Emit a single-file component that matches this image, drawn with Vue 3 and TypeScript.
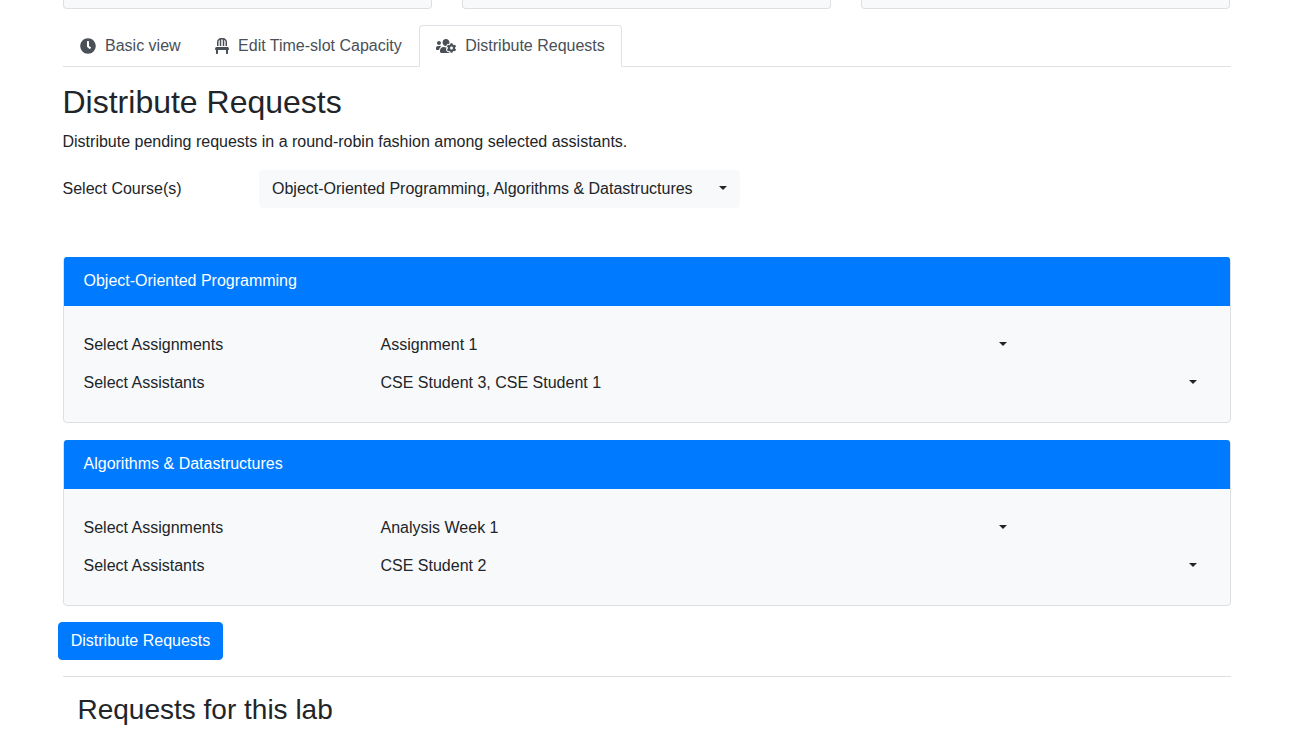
<script setup lang="ts">
interface Tab { label: string; view: string; width: number; d: string; active?: boolean }
interface Panel { title: string; assignment: string; assistants: string }

const tabs: Tab[] = [
  { label: 'Basic view', view: '0 0 512 512', width: 16, d: 'M256,8C119,8,8,119,8,256S119,504,256,504,504,393,504,256,393,8,256,8Zm92.49,313h0l-20,25a16,16,0,0,1-22.49,2.5h0l-67-49.72a40,40,0,0,1-15-31.23V112a16,16,0,0,1,16-16h32a16,16,0,0,1,16,16V256l58,42.5A16,16,0,0,1,348.49,321Z' },
  { label: 'Edit Time-slot Capacity', view: '0 0 448 512', width: 14, d: 'M112 128c0-29.5 16.2-55 40-68.9V256h48V48h48v208h48V59.1c23.8 13.9 40 39.4 40 68.9v128h48V128C384 57.3 326.7 0 256 0h-64C121.3 0 64 57.3 64 128v128h48zm334.3 213.9l-10.7-32c-4.4-13.1-16.6-21.9-30.4-21.9H42.7c-13.8 0-26 8.8-30.4 21.9l-10.7 32C-5.2 362.6 10.2 384 32 384v112c0 8.8 7.2 16 16 16h32c8.8 0 16-7.2 16-16V384h256v112c0 8.8 7.2 16 16 16h32c8.8 0 16-7.2 16-16V384c21.8 0 37.2-21.4 30.3-42.1z' },
  { label: 'Distribute Requests', view: '0 0 640 512', width: 20, active: true, d: 'M610.5 341.3c2.6-14.1 2.6-28.5 0-42.6l25.8-14.9c3-1.7 4.3-5.2 3.3-8.5-6.7-21.6-18.2-41.2-33.2-57.4-2.3-2.5-6-3.1-9-1.4l-25.8 14.9c-10.9-9.3-23.4-16.5-36.9-21.3v-29.8c0-3.4-2.4-6.4-5.7-7.1-22.3-5-45-4.8-66.2 0-3.3.7-5.7 3.7-5.7 7.1v29.8c-13.5 4.8-26 12-36.9 21.3l-25.8-14.9c-2.9-1.7-6.7-1.1-9 1.4-15 16.2-26.5 35.8-33.2 57.4-1 3.3.4 6.8 3.3 8.5l25.8 14.9c-2.6 14.1-2.6 28.5 0 42.6l-25.8 14.9c-3 1.7-4.3 5.2-3.3 8.5 6.7 21.6 18.2 41.1 33.2 57.4 2.3 2.5 6 3.1 9 1.4l25.8-14.9c10.9 9.3 23.4 16.5 36.9 21.3v29.8c0 3.4 2.4 6.4 5.7 7.1 22.3 5 45 4.8 66.2 0 3.3-.7 5.7-3.7 5.7-7.1v-29.8c13.5-4.8 26-12 36.9-21.3l25.8 14.9c2.9 1.7 6.7 1.1 9-1.4 15-16.2 26.5-35.8 33.2-57.4 1-3.3-.4-6.8-3.3-8.5l-25.8-14.9zM496 368.5c-26.8 0-48.5-21.8-48.5-48.5s21.8-48.5 48.5-48.5 48.5 21.8 48.5 48.5-21.7 48.5-48.5 48.5zM96 224c35.3 0 64-28.7 64-64s-28.7-64-64-64-64 28.7-64 64 28.7 64 64 64zm224 32c1.9 0 3.7-.5 5.6-.6 8.3-21.7 20.5-42.1 36.3-59.2 7.4-8 17.9-12.6 28.9-12.6 6.9 0 13.7 1.8 19.6 5.3l7.9 4.6c.8-.5 1.6-.9 2.4-1.4 7-14.6 11.2-30.8 11.2-48 0-61.9-50.1-112-112-112S208 82.1 208 144c0 61.9 50.1 112 112 112zm105.2 194.5c-2.3-1.2-4.6-2.6-6.8-3.9-8.2 4.8-15.3 9.8-27.5 9.8-10.9 0-21.4-4.6-28.9-12.6-18.3-19.8-32.3-43.9-40.2-69.6-10.7-34.5 24.9-49.7 25.8-50.3-.1-2.6-.1-5.2 0-7.8l-7.9-4.6c-3.8-2.2-7-5-9.8-8.1-3.3.2-6.5.6-9.8.6-24.6 0-47.6-6-68.5-16h-8.3C179.6 288 128 339.6 128 403.2V432c0 26.5 21.5 48 48 48h255.4c-3.7-6-6.2-12.8-6.2-20.1v-9.4zM173.1 274.6C161.5 263.1 145.6 256 128 256H64c-35.3 0-64 28.7-64 64v32c0 17.7 14.3 32 32 32h65.9c6.3-47.4 34.9-87.3 75.2-109.4z' },
]

const panels: Panel[] = [
  { title: 'Object-Oriented Programming', assignment: 'Assignment 1', assistants: 'CSE Student 3, CSE Student 1' },
  { title: 'Algorithms & Datastructures', assignment: 'Analysis Week 1', assistants: 'CSE Student 2' },
]
</script>

<template>
  <main class="page">
    <div class="stats">
      <div v-for="n in 3" :key="n" class="stat"></div>
    </div>

    <nav class="tabs">
      <a v-for="t in tabs" :key="t.label" class="tab" :class="{ active: t.active }">
        <svg class="icon" :viewBox="t.view" :width="t.width" height="16" aria-hidden="true">
          <path fill="currentColor" :d="t.d" />
        </svg>
        <span>{{ t.label }}</span>
      </a>
    </nav>

    <h2 class="title">Distribute Requests</h2>
    <p class="lead">Distribute pending requests in a round-robin fashion among selected assistants.</p>

    <div class="course-row">
      <label class="course-label">Select Course(s)</label>
      <button class="select course-select" type="button">
        <span>Object-Oriented Programming, Algorithms &amp; Datastructures</span>
        <i class="caret"></i>
      </button>
    </div>

    <section v-for="p in panels" :key="p.title" class="panel">
      <header class="panel-head">{{ p.title }}</header>
      <div class="panel-body">
        <label class="field-label">Select Assignments</label>
        <button class="select assignment" type="button">
          <span>{{ p.assignment }}</span>
          <i class="caret"></i>
        </button>
        <label class="field-label">Select Assistants</label>
        <button class="select" type="button">
          <span>{{ p.assistants }}</span>
          <i class="caret"></i>
        </button>
      </div>
    </section>

    <button class="primary" type="button">Distribute Requests</button>
    <hr class="rule" />
    <h3 class="sub">Requests for this lab</h3>
  </main>
</template>

<style scoped>
.page {
  width: 1168.5px;
  margin-left: 62.5px;
  color: #212529;
  font-family: "Liberation Sans", Arial, sans-serif;
  font-size: 16px;
  line-height: 24px;
}
.stats {
  display: grid;
  grid-template-columns: repeat(3, 369px);
  column-gap: 30px;
  margin-bottom: 16px;
}
.stat {
  height: 9px;
  box-sizing: border-box;
  background: #f8f9fa;
  border: 1px solid #dfdfdf;
  border-top: 0;
  border-radius: 0 0 4px 4px;
}
.tabs {
  display: flex;
  border-bottom: 1px solid #dee2e6;
  height: 42px;
  box-sizing: border-box;
}
.tab {
  display: flex;
  align-items: center;
  gap: 9.5px;
  height: 42px;
  box-sizing: border-box;
  padding: 0 16px;
  border: 1px solid transparent;
  border-radius: 4px 4px 0 0;
  color: #495057;
}
.tab.active {
  background: #fff;
  border-color: #dee2e6 #dee2e6 #fff;
}
.icon {
  display: block;
  flex: none;
}
.title {
  margin: 16px 0 8.6px;
  font-size: 32px;
  font-weight: 500;
  line-height: 38.4px;
}
.lead {
  margin: 0 0 16px;
}
.course-row {
  display: flex;
  align-items: center;
  margin-bottom: 49px;
}
.course-label {
  width: 196.5px;
}
.select {
  display: flex;
  align-items: center;
  justify-content: space-between;
  height: 38px;
  box-sizing: border-box;
  padding: 0 12px;
  border: 1px solid transparent;
  border-radius: 4px;
  background: #f8f9fa;
  color: #212529;
  font: inherit;
  text-align: left;
}
.course-select {
  width: 481px;
}
.caret {
  width: 0;
  height: 0;
  margin-bottom: 2px;
  border-top: 4.8px solid #212529;
  border-left: 4.8px solid transparent;
  border-right: 4.8px solid transparent;
}
.panel {
  height: 166px;
  box-sizing: border-box;
  margin-bottom: 17px;
  border: 1px solid #dfdfdf;
  border-radius: 4px;
  background: #f8f9fa;
}
.panel-head {
  height: 49px;
  box-sizing: border-box;
  margin-top: -1px;
  padding: 12px 20px;
  background: #007bff;
  color: #fff;
  border-radius: 3px 3px 0 0;
}
.panel-body {
  display: grid;
  grid-template-columns: 284px 1fr;
  grid-auto-rows: 38px;
  align-items: center;
  padding: 20px 20px 0;
}
.assignment {
  width: 652.5px;
}
.primary {
  display: block;
  width: 165px;
  height: 38px;
  margin: -1px 0 0 -4.5px;
  padding: 0;
  border: 1px solid #007bff;
  border-radius: 4px;
  background: #007bff;
  color: #fff;
  font: inherit;
}
.rule {
  margin: 16px 0;
  border: 0;
  border-top: 1px solid #dfdfdf;
}
.sub {
  margin: 0 0 0 15px;
  font-size: 28px;
  font-weight: 500;
  line-height: 33.6px;
}
</style>

<style>
html, body {
  height: 729px;
  overflow: hidden;
  background: #fff;
}
</style>
